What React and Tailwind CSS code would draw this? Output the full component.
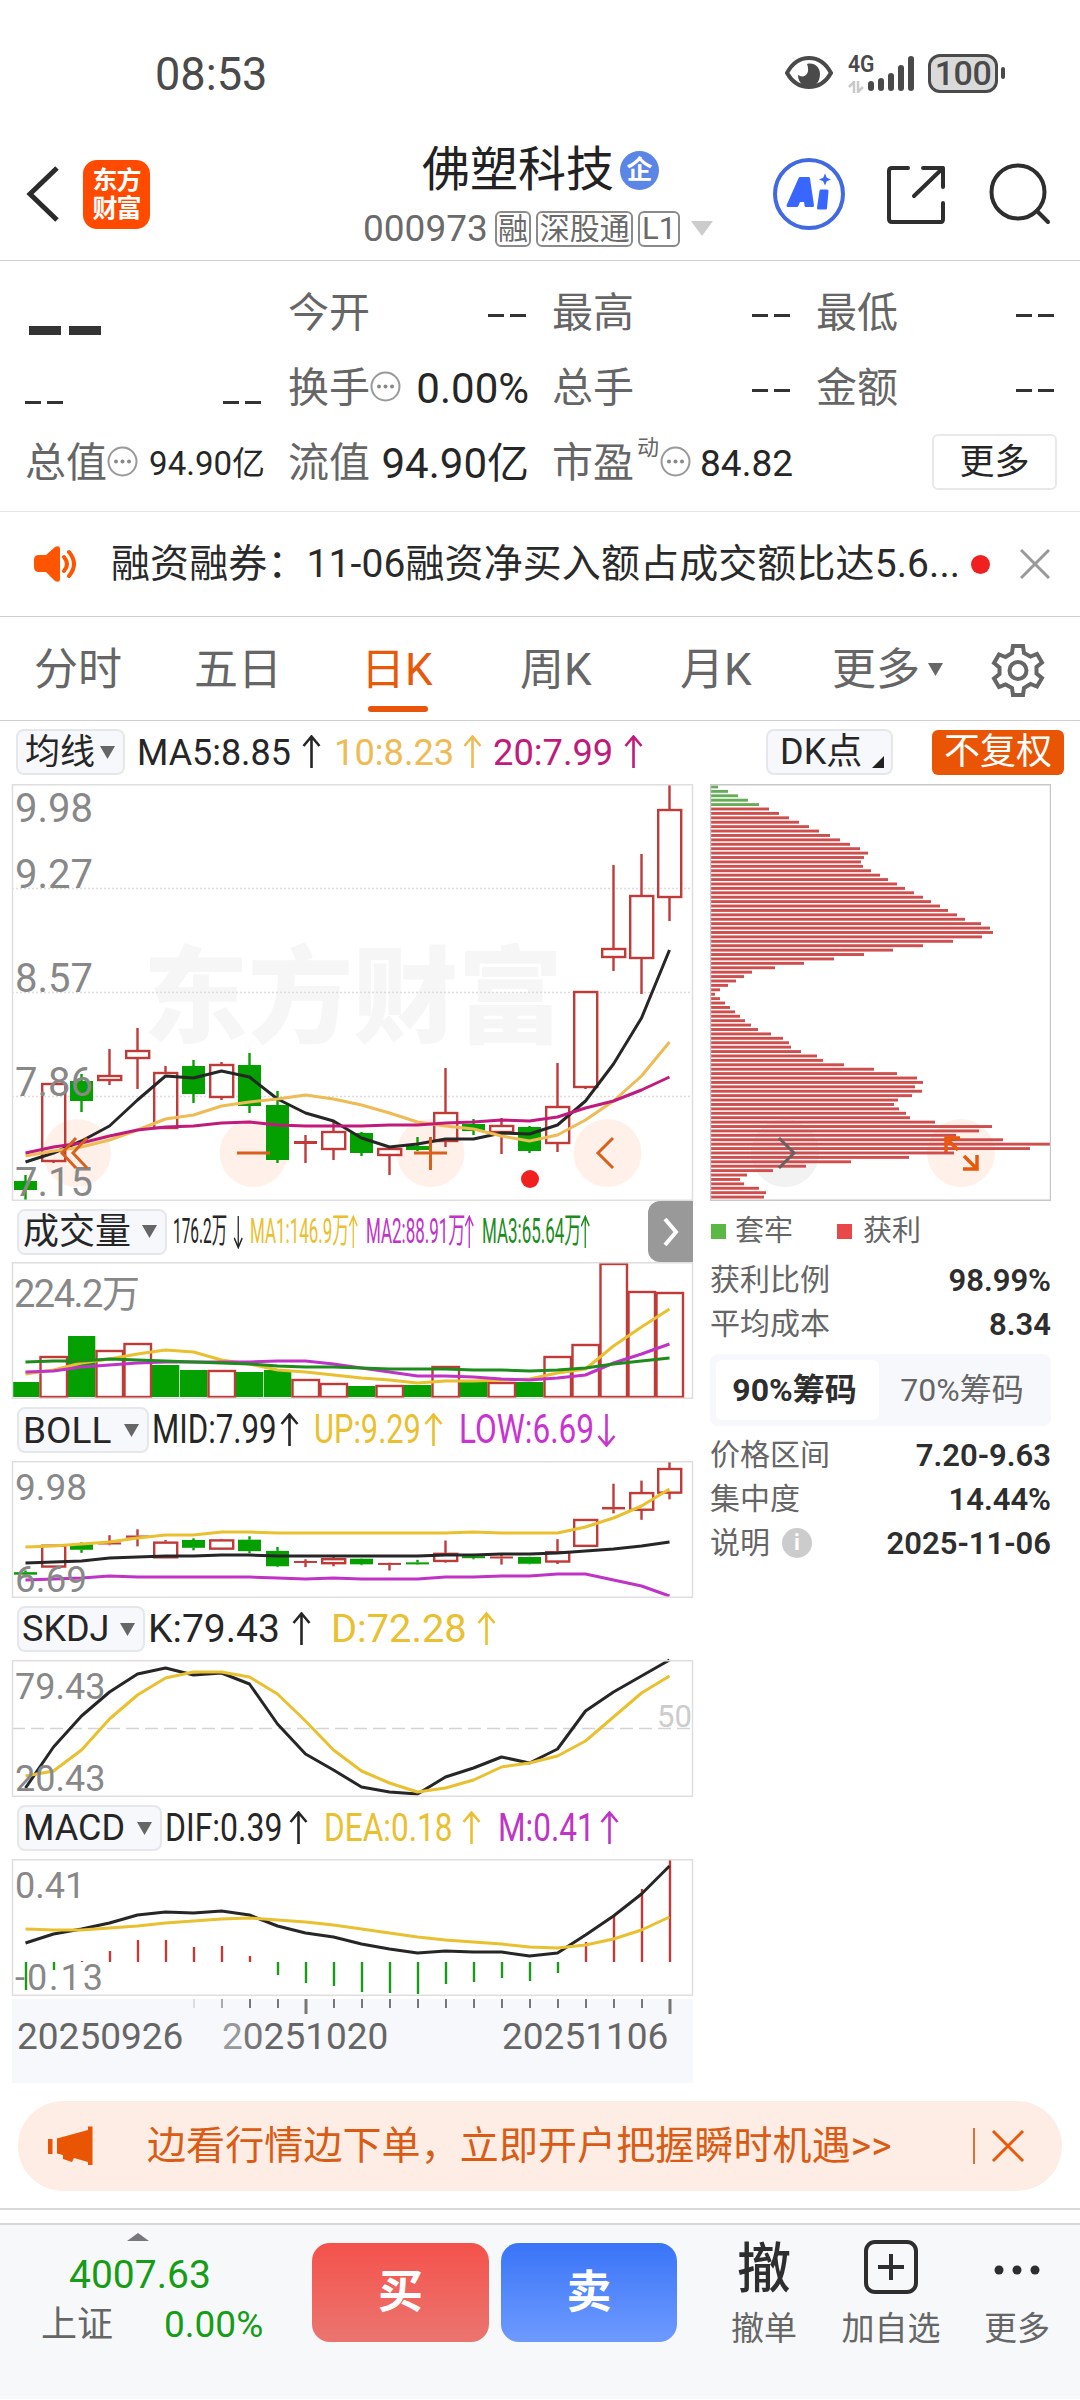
const STEP = 28;
const FIRST = 13.5;

// [direction, high, body top, body bottom, low] in chart pixels, 0 = 9.98
const candles = [
  ["g", 391, 397, 406, 416],
  ["r", 299, 299, 377, 379],
  ["g", 290, 297, 317, 328],
  ["r", 265, 291, 296, 301],
  ["r", 244, 266, 274, 305],
  ["r", 282, 288, 344, 344],
  ["g", 276, 282, 310, 319],
  ["r", 278, 280, 313, 316],
  ["g", 269, 281, 322, 329],
  ["g", 307, 321, 376, 379],
  ["r", 351, 357, 360, 379],
  ["r", 338, 347, 365, 376],
  ["g", 348, 349, 369, 372],
  ["r", 363, 364, 371, 391],
  ["g", 353, 362, 366, 367],
  ["r", 284, 328, 357, 363],
  ["g", 335, 340, 347, 351],
  ["r", 334, 341, 348, 370],
  ["g", 342, 343, 367, 369],
  ["r", 279, 322, 359, 368],
  ["r", 207, 207, 303, 305],
  ["r", 81, 164, 173, 187],
  ["r", 70, 111, 174, 210],
  ["r", 0, 25, 113, 137],
];

const ma5 = [378, 369, 357, 342, 316, 292, 294, 287, 293, 315, 329, 337, 354, 363, 360, 355, 355, 349, 350, 341, 317, 280, 234, 166];
const ma10 = [372, 367, 363, 356, 346, 335, 331, 322, 318, 315, 311, 315, 321, 329, 338, 342, 345, 352, 357, 351, 336, 317, 292, 258];
const ma20 = [369, 363, 359, 352, 346, 343, 342, 339, 338, 341, 342, 342, 342, 341, 341, 339, 338, 336, 337, 333, 324, 317, 306, 293];

const volumes = [
  ["g", 120], ["r", 94], ["g", 74], ["r", 88], ["r", 81], ["g", 103], ["g", 108], ["r", 108],
  ["g", 110], ["g", 108], ["r", 117], ["r", 121], ["g", 124], ["r", 123], ["g", 123], ["r", 104],
  ["g", 120], ["r", 120], ["g", 120], ["r", 94], ["r", 82], ["r", 1], ["r", 29], ["r", 30],
];
const vol1 = [112, 108, 101, 97, 92, 88, 90, 98, 102, 108, 110, 113, 116, 118, 121, 119, 119, 118, 117, 111, 107, 84, 65, 47];
const vol2 = [110, 109, 105, 103, 101, 100, 100, 100, 100, 99, 99, 102, 106, 110, 114, 114, 115, 117, 118, 116, 113, 101, 92, 82];
const vol3 = [100, 99, 99, 97, 98, 99, 100, 101, 102, 104, 105, 105, 106, 107, 107, 107, 108, 108, 109, 108, 106, 102, 99, 96];

const bollUp = [86, 85, 83, 81, 77, 74, 74, 71, 71, 72, 72, 72, 72, 72, 72, 72, 71, 72, 72, 72, 66, 57, 45, 28];
const bollMid = [102, 101, 100, 97, 96, 95, 95, 94, 94, 95, 95, 95, 95, 95, 95, 94, 94, 93, 93, 92, 90, 88, 85, 81];
const bollLow = [119, 118, 117, 115, 116, 116, 116, 116, 116, 117, 118, 117, 118, 118, 118, 116, 116, 115, 115, 113, 113, 119, 125, 135];

const skdjK = [128, 87, 56, 32, 14, 8, 15, 13, 24, 64, 94, 110, 127, 132, 134, 117, 108, 97, 103, 89, 51, 32, 16, 0];
const skdjD = [116, 111, 90, 59, 35, 18, 12, 12, 17, 34, 61, 90, 111, 123, 132, 128, 120, 107, 103, 96, 81, 57, 33, 16];

const macdBars = [131, 111, 102, 92, 81, 81, 88, 87, 97, 116, 124, 127, 133, 134, 135, 125, 123, 119, 122, 114, 83, 57, 30, 0];
const dif = [84, 75, 70, 64, 56, 53, 54, 52, 56, 67, 74, 78, 85, 90, 94, 92, 93, 93, 97, 94, 76, 57, 35, 7];
const dea = [70, 71, 71, 69, 67, 64, 62, 60, 59, 61, 63, 66, 70, 74, 78, 81, 83, 85, 88, 89, 86, 80, 71, 58];

// chip distribution, top price to bottom price
const chips = [
  7, 17, 27, 37, 48, 58, 68, 78, 88, 98, 108, 119, 129, 139, 149, 157, 153, 150, 152, 160, 169, 177, 186, 194,
  203, 212, 220, 229, 237, 246, 254, 270, 279, 282, 271, 242, 212, 182, 153, 123, 93, 64, 41, 33, 25, 17, 9, 4,
  9, 14, 19, 24, 29, 34, 40, 47, 60, 72, 78, 80, 90, 106, 112, 133, 163, 186, 206, 212, 204, 211, 201, 187,
  183, 188, 195, 199, 224, 281, 268, 245, 292, 339, 319, 243, 198, 140, 95, 62, 36, 29, 33, 48, 55, 53,
];

const RED = "#c03a38";
const GREEN = "#04a000";
const BLACK = "#262626";
const YELLOW = "#e9c02f";
const PURPLE = "#bf34c6";

const xAt = (i) => FIRST + i * STEP;

function Line({ data, color }) {
  const points = data.map((y, i) => `${xAt(i)},${y}`).join(" ");
  return <polyline points={points} fill="none" stroke={color} strokeWidth="3" strokeLinejoin="round" />;
}

function Candles({ scale = 1 }) {
  return candles.map(([dir, high, top, bottom, low], i) => {
    const color = dir === "r" ? RED : GREEN;
    const x = xAt(i);
    const t = top * scale;
    const b = Math.max(bottom * scale, t + 2);
    const hollow = dir === "r" && b - t > 4;
    return (
      <g key={i} stroke={color} strokeWidth="2.4">
        <line x1={x} x2={x} y1={high * scale} y2={t} />
        <line x1={x} x2={x} y1={b} y2={low * scale} />
        {hollow ? (
          <rect x={x - 11.3} y={t + 1} width="23" height={b - t - 1} fill="none" />
        ) : (
          <rect x={x - 11.5} y={t} width="23" height={b - t} fill={color} strokeWidth="0" />
        )}
      </g>
    );
  });
}

function AxisLabel({ x = 3, y, size = 40, color = "#888", width, children }) {
  return (
    <text x={x} y={y} fontSize={size} fill={color} textLength={width}>
      {children}
    </text>
  );
}

function Pane({ children }) {
  return (
    <svg width="681" height="137" viewBox="0 0 681 137" className="ml-3 block overflow-visible">
      {children}
      <rect x="0.5" y="0.75" width="680" height="135.5" fill="none" stroke="#dedede" strokeWidth="1.5" />
    </svg>
  );
}

function Arrow({ down }) {
  return (
    <svg width="19" height="34" viewBox="0 0 19 34" className="shrink-0" fill="none" stroke="currentColor" strokeWidth="2.6">
      <path d={down ? "M9.5 1v31M1.5 23 9.500 32.500 17.500 23" : "M9.500 33V2M1.500 11 9.500 1.500 17.500 11"} />
    </svg>
  );
}

function Caret({ className = "" }) {
  return (
    <svg width="15" height="13" viewBox="0 0 15 13" className={className}>
      <path d="M0 0h15L7.500 13z" fill="#666" />
    </svg>
  );
}

function Picker({ label, className }) {
  return (
    <div className={`flex h-[46px] shrink-0 items-center justify-between rounded-lg border-2 border-[#e6e7ea] bg-[#f7f8fb] text-[#262626] ${className}`}>
      <span className="whitespace-nowrap">{label}</span>
      <Caret />
    </div>
  );
}

// width = room the text and its arrow take, squeeze = horizontal scale
function Legend({ text, down, className, squeeze = "", arrow = "" }) {
  return (
    <div className={`flex shrink-0 items-center justify-between ${className}`}>
      <span className="w-0 whitespace-nowrap">
        <span className={`inline-block origin-left ${squeeze}`}>{text}</span>
      </span>
      <span className={`flex shrink-0 origin-right ${arrow}`}>
        <Arrow down={down} />
      </span>
    </div>
  );
}

function StatusBar() {
  return (
    <div className="flex h-[125px] items-center pt-[21px] text-[#4a4a4a]">
      <div className="ml-[155px] w-[630px] text-[47px] leading-none">
        <span className="inline-block origin-left scale-x-[0.96]">08:53</span>
      </div>
      <svg width="48" height="34" viewBox="0 0 48 34">
        <path d="M2 17Q10 2 24 2t22 15Q38 31 24 31T2 17z" fill="none" stroke="#4a4a4a" strokeWidth="4" />
        <path d="M22 8c7-2 13 3 13 10 0 8-5 13-11 13s-11-5-11-12c6 4 13-1 9-11z" fill="#4a4a4a" />
      </svg>
      <div className="ml-[15px] flex h-[38px] w-[66px] items-end">
        <div className="flex w-[20px] shrink-0 flex-col self-start">
          <span className="w-0 text-[24px] font-semibold leading-[21px]">
            <span className="inline-block origin-left scale-x-[0.88]">4G</span>
          </span>
          <svg width="16" height="12" viewBox="0 0 16 12" className="mt-1.5" fill="none" stroke="#c9c9c9" strokeWidth="2.500">
            <path d="M6 12V1L1 6M10 0v11l5-5" />
          </svg>
        </div>
        <svg width="46" height="38" viewBox="0 0 46 38" stroke="#4a4a4a" strokeWidth="6" strokeLinecap="round">
          <path d="M3 30v4M13 27v7M23 22v12M33 14v20M43 5v29" />
        </svg>
      </div>
      <div className="ml-[14px] flex h-[39px] w-[70px] items-center justify-center rounded-xl border-[3px] border-[#4a4a4a] bg-[#dadada] text-[34px] font-medium leading-none tracking-[-0.5px]">
        100
      </div>
      <div className="ml-[3px] h-3 w-1 rounded-full bg-[#4a4a4a]" />
    </div>
  );
}

function Header() {
  return (
    <div className="flex h-[136px] items-start border-b border-[#cfcfcf]">
      <svg width="34" height="56" viewBox="0 0 34 56" className="ml-[26px] mt-[41px]" fill="none" stroke="#2b2b2b" strokeWidth="5">
        <path d="M31 2 4 28l27 26" />
      </svg>
      <div className="ml-[23px] mt-[35px] flex h-[69px] w-[67px] flex-col items-center justify-center rounded-[14px] bg-[#ff4a00] text-[25px] font-semibold leading-[28px] tracking-[-1px] text-white">
        <span>东方</span>
        <span>财富</span>
      </div>
      <div className="ml-[213px] flex w-[350px] flex-col">
        <div className="ml-[59px] mt-[16px] flex h-[58px] items-center text-[48px] leading-none text-[#222]">
          <span className="w-[194px] whitespace-nowrap">佛塑科技</span>
          <span className="ml-1 flex size-[39px] items-center justify-center rounded-full bg-[#5b86e5] text-[26px] font-bold text-white">企</span>
        </div>
        <div className="flex h-[59px] items-center gap-[5px] text-[33px] leading-none text-[#6a6a6a]">
          <span className="w-[127px] text-[37px]">000973</span>
          <span className="flex h-9 w-[37px] items-center justify-center rounded-md border-2 border-[#8a8a8a] text-[30px]">融</span>
          <span className="flex h-9 w-[97px] items-center justify-center whitespace-nowrap rounded-md border-2 border-[#8a8a8a] text-[30px]">深股通</span>
          <span className="flex h-9 w-[42px] items-center justify-center rounded-md border-2 border-[#8a8a8a] text-[31px]">L1</span>
          <svg width="22" height="15" viewBox="0 0 22 15" className="ml-1.5">
            <path d="M0 0h22L11 15z" fill="#ccc" />
          </svg>
        </div>
      </div>
      <svg width="72" height="74" viewBox="0 0 72 74" className="ml-[60px] mt-8">
        <circle cx="36" cy="37" r="34" fill="none" stroke="#4169e1" strokeWidth="4" />
        <g fill="#3866ff" stroke="#3866ff" strokeWidth="3" strokeLinejoin="round">
          <path fillRule="evenodd" d="M27 21.500h8.500l4 27h-6.500l-.5-5h-6.500l-2 5h-9zM28.500 37h3l-.5-6z" />
          <path d="M48 34h6l-1.500 17h-7z" />
        </g>
        <path d="M52 16.500l1.800 4.200 4.200 1.800-4.200 1.800-1.800 4.200-1.800-4.200-4.200-1.800 4.200-1.800z" fill="#3866ff" />
      </svg>
      <svg width="60" height="60" viewBox="0 0 60 60" className="ml-[41px] mt-10" fill="none" stroke="#2e2e2e" strokeWidth="4" strokeLinecap="round" strokeLinejoin="round">
        <path d="M22 3H6Q3 3 3 6v48q0 3 3 3h49q2 0 2-3V38M37 3h20v19M57 3 28 31" />
      </svg>
      <svg width="62" height="62" viewBox="0 0 62 62" className="ml-[43px] mt-[38px]" fill="none" stroke="#2e2e2e" strokeWidth="4" strokeLinecap="round">
        <circle cx="29" cy="29" r="26.500" />
        <path d="M48 48 59 59" />
      </svg>
    </div>
  );
}

function Dots() {
  return (
    <svg width="31" height="31" viewBox="0 0 31 31" className="mb-1 shrink-0">
      <circle cx="15.500" cy="15.500" r="14" fill="none" stroke="#999" strokeWidth="2" />
      <g fill="#888">
        <circle cx="9" cy="15.500" r="2" />
        <circle cx="15.500" cy="15.500" r="2" />
        <circle cx="22" cy="15.500" r="2" />
      </g>
    </svg>
  );
}

function Dashes() {
  return (
    <div className="mt-1 flex gap-1.5">
      <div className="h-[3px] w-4 bg-[#333]" />
      <div className="h-[3px] w-4 bg-[#333]" />
    </div>
  );
}

function Cell({ label, value, tip, sup, size = "text-[44px]", className = "" }) {
  return (
    <div className={`flex shrink-0 items-center justify-between ${className}`}>
      <div className="flex shrink-0 items-center text-[41px] text-[#666]">
        <span className="whitespace-nowrap">{label}</span>
        {sup && <span className="mb-8 ml-[3px] w-[23px] text-[22px]">{sup}</span>}
        {tip && <Dots />}
      </div>
      {value === "--" ? <Dashes /> : <span className={`-mr-[3px] whitespace-nowrap text-[#262626] ${size}`}>{value}</span>}
    </div>
  );
}

function Quote() {
  return (
    <div className="flex h-[251px] flex-col border-b border-[#e6e6e6] pl-[25px] pr-[26px] pt-[15px] leading-none">
      <div className="flex h-[75px]">
        <div className="flex w-[263px] shrink-0 items-center gap-2 pl-[4px] pt-[34px]">
          <div className="h-[9px] w-8 bg-[#333]" />
          <div className="h-[9px] w-8 bg-[#333]" />
        </div>
        <Cell label="今开" value="--" className="w-[238px]" />
        <Cell label="最高" value="--" className="ml-[26px] w-[238px]" />
        <Cell label="最低" value="--" className="ml-[26px] w-[238px]" />
      </div>
      <div className="flex h-[75px]">
        <div className="mr-[27px] flex w-[236px] shrink-0 items-center justify-between pt-6">
          <Dashes />
          <Dashes />
        </div>
        <Cell label="换手" value="0.00%" tip className="w-[238px]" size="text-[42px]" />
        <Cell label="总手" value="--" className="ml-[26px] w-[238px]" />
        <Cell label="金额" value="--" className="ml-[26px] w-[238px]" />
      </div>
      <div className="flex h-[75px]">
        <Cell label="总值" value="94.90亿" tip size="text-[33px]" className="w-[237px]" />
        <Cell label="流值" value="94.90亿" size="text-[42px]" className="ml-[26px] w-[238px]" />
        <Cell label="市盈" value="84.82" tip sup="动" size="text-[37px]" className="ml-[26px] w-[238px]" />
        <div className="ml-[142px] mt-[8px] flex h-[56px] w-[125px] shrink-0 items-center justify-center rounded-md border-2 border-[#e8e8e8] text-[35px] text-[#262626]">
          更多
        </div>
      </div>
    </div>
  );
}

function Notice() {
  return (
    <div className="flex h-[105px] items-center border-b border-[#cfcfcf] leading-none">
      <svg width="46" height="38" viewBox="0 0 46 38" className="ml-[33px]">
        <path d="M6 10h7L22 2q5-2 5 2v30q0 4-5 2l-9-9H6q-5 0-5-5v-7q0-5 5-5z" fill="#ff5500" />
        <path d="M31 12q6 7 0 14M36 7q10 12 0 24" fill="none" stroke="#ff5500" strokeWidth="4" strokeLinecap="round" />
      </svg>
      <span className="ml-[32px] w-[848px] whitespace-nowrap text-[39px] tracking-[0.1px] text-[#2a2a2a]">
        融资融券：11-06融资净买入额占成交额比达5.6...
      </span>
      <div className="ml-[12px] size-[19px] rounded-full bg-[#f02020]" />
      <svg width="30" height="30" viewBox="0 0 30 30" className="ml-[30px]" stroke="#999" strokeWidth="3">
        <path d="M1 1l28 28M29 1 1 29" />
      </svg>
    </div>
  );
}

function Tabs() {
  return (
    <div className="flex h-[104px] items-center border-b border-[#cfcfcf] pl-[34px] pt-[2px] text-[44px] leading-none text-[#666]">
      <span className="w-[160px]">分时</span>
      <span className="w-[167px]">五日</span>
      <div className="relative w-[159px] text-[#e8590c]">
        日K
        <div className="absolute left-[7px] top-[58px] h-[6px] w-[60px] rounded-full bg-[#e8550a]" />
      </div>
      <span className="w-[160px]">周K</span>
      <span className="w-[152px]">月K</span>
      <span className="w-[88px] shrink-0">更多</span>
      <Caret className="ml-2" />
      <svg width="54" height="54" viewBox="0 0 54 54" className="ml-[48px]" fill="none" stroke="#666" strokeWidth="4" strokeLinejoin="miter">
        <path d="M22 3h10l1 7 6.500 3.500 6.500-2.500 5 8.500-5.500 4.500v6.500l5.500 4.500-5 8.500-6.500-2.500L33 45l-1 7H22l-1-7-6.500-3.500L8 44l-5-8.500L8.500 31v-6.500L3 20l5-8.500 6.500 2.500L21 10z" />
        <circle cx="27" cy="27.500" r="8.500" />
      </svg>
    </div>
  );
}

function KLine() {
  return (
    <svg width="681" height="417" viewBox="0 0 681 417" className="ml-3 block overflow-visible">
      <text x="131" y="250" fontSize="105" fontWeight="900" fill="#f6f6f6" textLength="420">
        东方财富
      </text>
      <path d="M0 104.500h680M0 208.500h680M0 312.500h680" stroke="#dcdcdc" strokeWidth="1.500" strokeDasharray="2 2" />
      <g fill="#fff1ea">
        <circle cx="65" cy="369" r="34" />
        <circle cx="241.500" cy="369" r="34" />
        <circle cx="418.500" cy="369" r="34" />
        <circle cx="595.500" cy="369" r="34" />
      </g>
      <Candles />
      <Line data={ma5} color={BLACK} />
      <Line data={ma10} color="#eebb55" />
      <Line data={ma20} color="#c01b7c" />
      <AxisLabel y={38}>9.98</AxisLabel>
      <AxisLabel y={104}>9.27</AxisLabel>
      <AxisLabel y={208}>8.57</AxisLabel>
      <AxisLabel y={312}>7.86</AxisLabel>
      <AxisLabel y={412}>7.15</AxisLabel>
      <g fill="none" stroke="#d9601c" strokeWidth="3">
        <path d="M64 354 50 369l14 15M75 354 61 369l14 15" />
        <path d="M225 369h33M402 369h33M418.500 353v33" />
        <path d="M601 354 586 369l15 15" />
      </g>
      <circle cx="518" cy="395" r="9" fill="#f02020" />
      <rect x="0.5" y="0.75" width="680" height="415.500" fill="none" stroke="#dedede" strokeWidth="1.500" />
    </svg>
  );
}

function ChipChart() {
  return (
    <svg width="341" height="417" viewBox="0 0 341 417" className="block">
      <circle cx="251" cy="369" r="34" fill="#fff1ea" />
      <circle cx="75" cy="369" r="34" fill="#f2f2f2" />
      {chips.map((w, i) => (
        <rect key={i} x="1" y={1.500 + i * 4.410} width={w} height="2.900" fill={i < 5 ? "#66ad58" : "#ce4e4e"} />
      ))}
      <path d="M69 354l15 15-15 15" fill="none" stroke="#6b5f5f" strokeWidth="3" />
      <path d="M236 368v-14h14M237 355l11 11M267 371v14h-14M266 384l-12-12" fill="none" stroke="#e8590c" strokeWidth="3.500" />
      <rect x="0.500" y="0.750" width="340" height="415.500" fill="none" stroke="#c8c8c8" strokeWidth="1.500" />
    </svg>
  );
}

function Indicators() {
  return (
    <div className="w-[693px] leading-none">
      <div className="relative flex h-[61px] items-center text-[35px]">
        <Picker label="成交量" className="ml-[17px] w-[150px] pl-1 pr-2 text-[36px]" />
        <Legend text="176.2万" down className="ml-1.5 w-[70px] text-[#262626]" squeeze="scale-x-[0.44]" arrow="scale-x-[0.5]" />
        <Legend text="MA1:146.9万" className="ml-[7px] w-[108px] text-[#e9c02f]" squeeze="scale-x-[0.485]" arrow="scale-x-[0.5]" />
        <Legend text="MA2:88.91万" className="ml-[8px] w-[108px] text-[#bf34c6]" squeeze="scale-x-[0.485]" arrow="scale-x-[0.5]" />
        <Legend text="MA3:65.64万" className="ml-[8px] w-[108px] text-[#1c8c1c]" squeeze="scale-x-[0.485]" arrow="scale-x-[0.5]" />
        <div className="absolute right-0 top-0 flex h-[61px] w-[45px] items-center justify-center rounded-l-xl bg-[#999]">
          <svg width="16" height="28" viewBox="0 0 16 28" fill="none" stroke="#fff" strokeWidth="4">
            <path d="M2 1l11 13L2 27" />
          </svg>
        </div>
      </div>
      <Pane>
        {volumes.map(([dir, y], i) =>
          dir === "r" ? (
            <rect key={i} x={i * STEP + 0.500} y={y + 1} width="26.500" height={134 - y} fill="#fff" stroke={RED} strokeWidth="2.400" />
          ) : (
            <rect key={i} x={i * STEP} y={y} width="27.300" height={135 - y} fill={GREEN} />
          )
        )}
        <Line data={vol1} color={YELLOW} />
        <Line data={vol2} color={PURPLE} />
        <Line data={vol3} color="#1c8c1c" />
        <AxisLabel x={2} y={45} size={38} width={126}>224.2万</AxisLabel>
      </Pane>

      <div className="flex h-[62px] items-center text-[40px]">
        <Picker label="BOLL" className="ml-[17px] w-[132px] pl-1 pr-2 text-[37px]" />
        <Legend text="MID:7.99" className="ml-[3px] w-[147px] text-[#262626]" squeeze="scale-x-[0.78]" />
        <Legend text="UP:9.29" className="ml-[15px] w-[129px] text-[#e9c02f]" squeeze="scale-x-[0.77]" />
        <Legend text="LOW:6.69" down className="ml-4 w-[157px] text-[#c934d0]" squeeze="scale-x-[0.79]" />
      </div>
      <Pane>
        <Candles scale={0.28} />
        <Line data={bollUp} color={YELLOW} />
        <Line data={bollMid} color={BLACK} />
        <Line data={bollLow} color={PURPLE} />
        <AxisLabel y={39} size={37}>9.98</AxisLabel>
        <AxisLabel y={131} size={37}>6.69</AxisLabel>
      </Pane>

      <div className="flex h-[62px] items-center text-[39px]">
        <Picker label="SKDJ" className="ml-[17px] w-[128px] pl-[3px] pr-2 text-[36px]" />
        <Legend text="K:79.43" className="ml-[3px] w-[163px] text-[#262626]" />
        <Legend text="D:72.28" className="ml-[20px] w-[165px] text-[#e9c02f]" squeeze="scale-x-[1.02]" />
      </div>
      <Pane>
        <path d="M0 68.500h680" stroke="#d4d4d4" strokeWidth="1.500" strokeDasharray="13 6" />
        <AxisLabel x={645} y={67} size={31} color="#ccc">50</AxisLabel>
        <Line data={skdjK} color={BLACK} />
        <Line data={skdjD} color={YELLOW} />
        <AxisLabel y={39} size={36}>79.43</AxisLabel>
        <AxisLabel y={131} size={36}>20.43</AxisLabel>
      </Pane>

      <div className="flex h-[62px] items-center text-[39px]">
        <Picker label="MACD" className="ml-[17px] w-[145px] pl-1 pr-2 text-[36px]" />
        <Legend text="DIF:0.39" className="ml-[3px] w-[143px] text-[#262626]" squeeze="scale-x-[0.82]" />
        <Legend text="DEA:0.18" className="ml-[16px] w-[157px] text-[#e9c02f]" squeeze="scale-x-[0.81]" />
        <Legend text="M:0.41" className="ml-[17px] w-[121px] text-[#bf34c6]" squeeze="scale-x-[0.81]" />
      </div>
      <Pane>
        {macdBars.map((y, i) => (
          <line key={i} x1={xAt(i) + 0.500} x2={xAt(i) + 0.500} y1="103" y2={y} stroke={y < 103 ? RED : "#1c9a1c"} strokeWidth="2.400" />
        ))}
        <Line data={dif} color={BLACK} />
        <Line data={dea} color={YELLOW} />
        <AxisLabel y={39} size={36}>0.41</AxisLabel>
        <AxisLabel y={131} size={36} width={88}>-0.13</AxisLabel>
      </Pane>

      <div className="ml-3 mt-[3px] h-[84px] bg-[#f7f8fb] text-[37px] text-[#666]">
        <svg width="681" height="15" viewBox="0 0 681 15" className="block">
          {macdBars.map((_, i) =>
            i < 6 ? null : (
              <line
                key={i}
                x1={xAt(i) + 0.500}
                x2={xAt(i) + 0.500}
                y1="0"
                y2={i === 10 || i === 23 ? 15 : 9}
                stroke={i === 6 ? "#ddd" : i === 7 ? "#aaa" : "#777"}
                strokeWidth={i === 10 || i === 23 ? 3 : 2}
              />
            )
          )}
        </svg>
        <div className="flex pl-[5px] pt-[4px]">
          <span className="w-[205px]">20250926</span>
          <span className="w-[280px]">
            <span className="text-[#999]">2</span>
            <span className="text-[#777]">0</span>251020
          </span>
          <span>20251106</span>
        </div>
      </div>
    </div>
  );
}

function StatRow({ label, value, info }) {
  return (
    <div className="flex h-[44px] items-center justify-between">
      <span className="flex items-center text-[30px] text-[#666]">
        {label}
        {info && (
          <span className="ml-3 flex size-[30px] items-center justify-center rounded-full bg-[#ccc] text-[22px] font-bold text-white">i</span>
        )}
      </span>
      <span className="text-[31px] font-semibold text-[#2e2e2e]">{value}</span>
    </div>
  );
}

function ChipPanel() {
  return (
    <div className="ml-[17px] w-[341px] leading-none">
      <div className="flex h-[61px] items-center text-[29px] text-[#666]">
        <div className="ml-px mr-[9px] size-[15px] bg-[#5cb844]" />
        套牢
        <div className="ml-[44px] mr-[11px] size-[15px] bg-[#e84848]" />
        获利
      </div>
      <div className="-mt-[4px]">
        <StatRow label="获利比例" value="98.99%" />
        <StatRow label="平均成本" value="8.34" />
      </div>
      <div className="mt-2 flex h-[72px] items-center rounded-lg bg-[#f7f8fb] p-1.5 text-[32px]">
        <div className="flex h-full w-[163px] items-center justify-center rounded-md bg-white pr-1.5 font-bold text-[#2e2e2e]">90%筹码</div>
        <div className="flex flex-1 items-center justify-center text-[#666]">70%筹码</div>
      </div>
      <div className="mt-[7px]">
        <StatRow label="价格区间" value="7.20-9.63" />
        <StatRow label="集中度" value="14.44%" />
        <StatRow label="说明" value="2025-11-06" info />
      </div>
    </div>
  );
}

function ChartToolbar() {
  return (
    <div className="flex h-[61px] items-center pt-px text-[37px] leading-none">
      <Picker label="均线" className="ml-4 w-[109px] pl-[7px] pr-2 text-[35px]" />
      <Legend text="MA5:8.85" className="ml-[12px] w-[184px] text-[#262626]" squeeze="scale-x-[0.97]" />
      <Legend text="10:8.23" className="ml-[13px] w-[148px] text-[#eebb55]" squeeze="scale-x-[0.98]" />
      <Legend text="20:7.99" className="ml-[11px] w-[150px] text-[#c01b7c]" squeeze="scale-x-[0.98]" />
      <div className="ml-[123px] flex h-[46px] w-[127px] items-center rounded-lg border-2 border-[#e6e7ea] bg-[#f7f8fb] pl-3 text-[36px] text-[#262626]">
        <span className="whitespace-nowrap">DK点</span>
        <svg width="12" height="12" viewBox="0 0 12 12" className="ml-[10px] mt-5 shrink-0">
          <path d="M12 0v12H0z" fill="#222" />
        </svg>
      </div>
      <div className="ml-[39px] flex h-[45px] w-[132px] items-center justify-center rounded-md bg-[#e95504] text-[36px] text-white">不复权</div>
    </div>
  );
}

function Banner() {
  return (
    <div className="mx-[18px] mt-[18px] flex h-[90px] items-center rounded-full bg-[#fdede4] leading-none text-[#d95b14]">
      <svg width="46" height="40" viewBox="0 0 46 40" className="ml-[29px]" fill="#ea5504">
        <path d="M1 13h4.500v15H1zM10 12.500 41 4V.5h4.500V39H41v-3l-14-4-2 4-9-3v-4l-6-1.500z" />
      </svg>
      <span className="ml-[54px] w-[824px] whitespace-nowrap text-[39px] tracking-[0.1px]">边看行情边下单，立即开户把握瞬时机遇&gt;&gt;</span>
      <div className="ml-[2px] h-9 w-[2px] bg-[#d9733a]" />
      <svg width="34" height="34" viewBox="0 0 34 34" className="ml-4" stroke="#e8590c" strokeWidth="3">
        <path d="M2 2l30 30M32 2 2 32" />
      </svg>
    </div>
  );
}

function BottomBar() {
  return (
    <div className="mt-[17px] border-t-2 border-[#d8d8d8] pt-[13px]">
      <div className="flex h-[176px] items-start border-t-2 border-[#d8d8d8] bg-[#f6f8fa] leading-none">
        <div className="flex w-[312px] flex-col">
          <svg width="22" height="8" viewBox="0 0 22 8" className="ml-[127px] mt-[8px]">
            <path d="M0 8 11 0l11 8z" fill="#77777d" />
          </svg>
          <span className="ml-[69px] mt-[15px] text-[39px] text-[#169c16]">4007.63</span>
          <div className="ml-[41px] mt-[11px] flex items-center text-[36px] text-[#666]">
            上证
            <span className="ml-[51px] text-[37px] text-[#169c16]">0.00%</span>
          </div>
        </div>
        <div className="mt-[18px] flex h-[99px] w-[177px] items-center justify-center rounded-[18px] bg-linear-to-b from-[#f4514b] to-[#eb746f] text-[45px] font-bold text-white">买</div>
        <div className="ml-3 mt-[18px] flex h-[99px] w-[176px] items-center justify-center rounded-[18px] bg-linear-to-b from-[#3974f7] to-[#6e9aff] text-[45px] font-bold text-white">卖</div>
        <div className="ml-[51px] flex w-[72px] flex-col items-center text-[33px] text-[#666]">
          <span className="mt-[18px] text-[54px] font-medium text-[#2e2e2e]">撤</span>
          <span className="mt-[15px] whitespace-nowrap">撤单</span>
        </div>
        <div className="ml-[38px] flex w-[106px] flex-col items-center text-[33px] text-[#666]">
          <svg width="56" height="56" viewBox="0 0 56 56" className="mt-[14px]" fill="none" stroke="#2e2e2e" strokeWidth="4">
            <rect x="3" y="3" width="50" height="50" rx="9" />
            <path d="M28 15v26M15 28h26" />
          </svg>
          <span className="mt-[17px] whitespace-nowrap">加自选</span>
        </div>
        <div className="ml-[35px] flex w-[76px] flex-col items-center text-[33px] text-[#666]">
          <svg width="48" height="12" viewBox="0 0 48 12" className="mt-[39px]" fill="#2e2e2e">
            <circle cx="6" cy="6" r="4.500" />
            <circle cx="24" cy="6" r="4.500" />
            <circle cx="42" cy="6" r="4.500" />
          </svg>
          <span className="mt-[36px] whitespace-nowrap">更多</span>
        </div>
      </div>
    </div>
  );
}

export default function App() {
  return (
    <div className="h-[2400px] w-[1080px] overflow-hidden bg-white font-['Roboto','Noto_Sans_CJK_SC',sans-serif]">
      <StatusBar />
      <Header />
      <Quote />
      <Notice />
      <Tabs />
      <ChartToolbar />
      <div className="mt-[2px] flex">
        <KLine />
        <div className="ml-[17px]">
          <ChipChart />
        </div>
      </div>
      <div className="flex">
        <Indicators />
        <ChipPanel />
      </div>
      <Banner />
      <BottomBar />
    </div>
  );
}
